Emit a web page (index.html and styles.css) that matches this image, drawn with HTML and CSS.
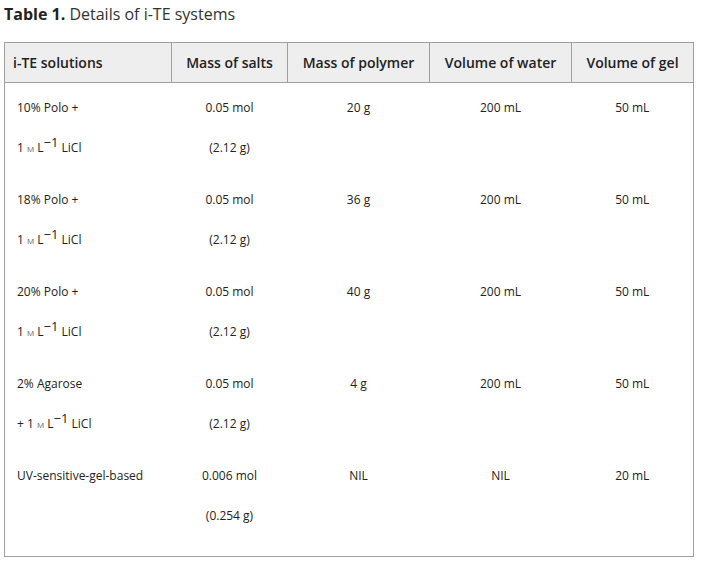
FILE: index.html
```html
<!DOCTYPE html>
<html lang="en">
<head>
<meta charset="utf-8">
<title>Table 1</title>
<link rel="stylesheet" href="styles.css">
</head>
<body>
<div class="caption"><b>Table 1.</b> Details of i-TE systems</div>
<table class="tbl">
  <colgroup>
    <col class="c1"><col class="c2"><col class="c3"><col class="c4"><col class="c5">
  </colgroup>
  <thead>
    <tr>
      <th class="left">i-TE solutions</th>
      <th>Mass of salts</th>
      <th>Mass of polymer</th>
      <th>Volume of water</th>
      <th>Volume of gel</th>
    </tr>
  </thead>
  <tbody>
    <tr>
      <td class="left"><div class="ln">10% Polo +</div><div class="ln">1 <span class="sc">m</span> L<sup>−1</sup> LiCl</div></td>
      <td><div class="ln">0.05 mol</div><div class="ln">(2.12 g)</div></td>
      <td><div class="ln">20 g</div></td>
      <td><div class="ln">200 mL</div></td>
      <td><div class="ln">50 mL</div></td>
    </tr>
    <tr>
      <td class="left"><div class="ln">18% Polo +</div><div class="ln">1 <span class="sc">m</span> L<sup>−1</sup> LiCl</div></td>
      <td><div class="ln">0.05 mol</div><div class="ln">(2.12 g)</div></td>
      <td><div class="ln">36 g</div></td>
      <td><div class="ln">200 mL</div></td>
      <td><div class="ln">50 mL</div></td>
    </tr>
    <tr>
      <td class="left"><div class="ln">20% Polo +</div><div class="ln">1 <span class="sc">m</span> L<sup>−1</sup> LiCl</div></td>
      <td><div class="ln">0.05 mol</div><div class="ln">(2.12 g)</div></td>
      <td><div class="ln">40 g</div></td>
      <td><div class="ln">200 mL</div></td>
      <td><div class="ln">50 mL</div></td>
    </tr>
    <tr>
      <td class="left"><div class="ln">2% Agarose</div><div class="ln">+ 1 <span class="sc">m</span> L<sup>−1</sup> LiCl</div></td>
      <td><div class="ln">0.05 mol</div><div class="ln">(2.12 g)</div></td>
      <td><div class="ln">4 g</div></td>
      <td><div class="ln">200 mL</div></td>
      <td><div class="ln">50 mL</div></td>
    </tr>
    <tr class="last">
      <td class="left"><div class="ln">UV-sensitive-gel-based</div></td>
      <td><div class="ln">0.006 mol</div><div class="ln">(0.254 g)</div></td>
      <td><div class="ln">NIL</div></td>
      <td><div class="ln">NIL</div></td>
      <td><div class="ln">20 mL</div></td>
    </tr>
  </tbody>
</table>
</body>
</html>
```
FILE: styles.css
```css
html, body {
  background: #ffffff;
}
body {
  margin: 0 4px;
  font-family: "Open Sans", "Noto Sans", sans-serif;
  color: #222222;
}
.caption {
  font-size: 16px;
  line-height: 22px;
  padding-top: 3px;
  margin-bottom: 17px;
  color: #333333;
}
.caption b {
  font-weight: 700;
  color: #222222;
}
.tbl {
  border-collapse: collapse;
  table-layout: fixed;
  width: 689px;
  border: 1px solid #a0a0a0;
}
.c1 { width: 167px; }
.c2 { width: 116px; }
.c3 { width: 142px; }
.c4 { width: 142px; }
.c5 { width: 122px; }
.tbl th {
  background: #eeeeee;
  border: 1px solid #a0a0a0;
  font-size: 14px;
  font-weight: 600;
  height: 40px;
  padding: 0 8px;
  text-align: center;
  color: #222222;
  box-sizing: border-box;
}
.tbl th.left {
  text-align: left;
}
.tbl td {
  vertical-align: top;
  text-align: center;
  font-size: 12px;
  padding: 15px 8px 17px;
  color: #222222;
}
.tbl td.left {
  text-align: left;
  padding-left: 12px;
}
.tbl tr.last td {
  padding-bottom: 30px;
}
.ln {
  line-height: 20px;
  height: 20px;
  margin-bottom: 20px;
  white-space: nowrap;
}
.ln:last-child {
  margin-bottom: 0;
}
.sc {
  font-variant: small-caps;
  color: #666666;
}
sup {
  font-size: 13px;
  line-height: 0;
  vertical-align: 5px;
}
```
